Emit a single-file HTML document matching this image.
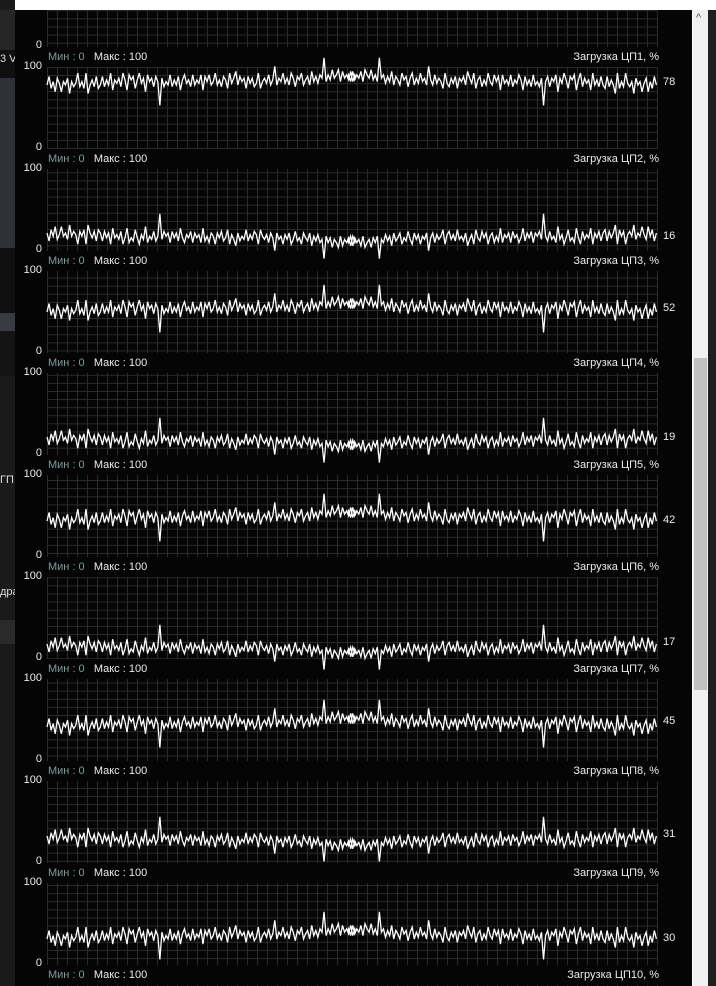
<!DOCTYPE html>
<html><head><meta charset="utf-8"><style>
html,body{margin:0;padding:0;width:716px;height:986px;overflow:hidden;background:#0a0a0a;font-family:"Liberation Sans",sans-serif;}
.a{position:absolute;}
.t{position:absolute;font-size:11px;color:#ececec;white-space:nowrap;line-height:12px;}
.ax{width:27px;text-align:right;left:15px;}
.mn{color:#7f9a9a;}
.r{left:563px;width:96px;text-align:right;}
.v{left:663px;}
</style></head><body>
<div class="a" style="left:0;top:0;width:15px;height:986px;background:#1a1a1a"></div>
<div class="a" style="left:0;top:10px;width:15px;height:40px;background:#262626"></div>
<div class="a" style="left:0;top:50px;width:15px;height:28px;background:#0f0f0f"></div>
<div class="a" style="left:0;top:78px;width:15px;height:170px;background:#2e3138"></div>
<div class="a" style="left:0;top:248px;width:15px;height:65px;background:#101010"></div>
<div class="a" style="left:0;top:313px;width:15px;height:18px;background:#383b42"></div>
<div class="a" style="left:0;top:331px;width:15px;height:45px;background:#141414"></div>
<div class="a" style="left:0;top:620px;width:15px;height:24px;background:#2a2a2a"></div>
<div class="t" style="left:0;top:53px;color:#ddd">3 V</div>
<div class="t" style="left:0;top:474px;color:#ddd">ГП</div>
<div class="t" style="left:0;top:586px;color:#ddd">дра</div>
<div class="a" style="left:15px;top:0;width:677px;height:986px;background:#050505"></div>
<svg class="a" style="left:0;top:0" width="716" height="986">
<defs>
<pattern id="g" x="47" y="67" width="10" height="8.1" patternUnits="userSpaceOnUse">
<path d="M0.5,0V8.1M0,0.5H10" stroke="#2b2b2b" stroke-width="1" fill="none"/>
</pattern>
<path id="w" fill="none" stroke="#fff" stroke-width="1.3" vector-effect="non-scaling-stroke" d="M47,0 l4,-5 4,7 4,-4 4,6 4,-8 4,3 4,5 4,-6 4,2 4,-4 4,9 4,-7 4,3 4,-2 4,-6 4,8 4,-3 4,4 4,-9 4,12 4,-5 4,-3 4,4 4,-6 4,7 4,-2 4,-5 4,6 4,-4 4,3 4,-7 4,10 4,-6 4,2 4,-3 4,5 4,-8 4,4 4,6 4,-9 4,3 4,-2 4,7 4,-5 4,-4 4,6 4,-3 4,8 4,-10 4,4 4,-2 4,5 4,-6 4,3 4,14 4,-16 4,5 4,-3 4,2 4,-6 4,7 4,-4 4,3 4,-5 4,8 4,-6 4,-3 4,5 4,-2 4,4 4,-7 4,6 4,-3 4,2 4,-5 4,9 4,-8 4,3 4,-4 4,6 4,-2 4,-5 4,7 4,-3 4,4 4,-6 4,2 4,5 4,-9 4,6 4,-3 4,-4 4,8 4,-5 4,3 4,-2 4,6 4,-7 4,4 4,-3 4,5 4,-2 4,-6 4,9 4,-4 4,-2 4,3 4,-5 4,6 4,-3 4,-8 4,11 4,-4 4,2 4,-5 4,6 4,-3 4,4 4,-7 4,3 4,5 4,-6 4,2 4,-4 4,7 4,-3 4,-2 4,5 4,-8 4,6 4,-3 4,4 4,-5 4,2 4,-12 4,14 4,-4 4,3 4,-6 4,5 4,-2 4,-3 4,7 4,-6 4,4 4,-2 4,3 4,-5 4,6 4,-4 2,2"/>
<g id="L"><use href="#w" transform="translate(22.9,0) scale(0.513,1.7)"/><use href="#w" transform="translate(680.5,0) scale(-0.513,1.7)"/></g>
<g id="M"><use href="#w" transform="translate(22.9,0) scale(0.513,-1.6)"/><use href="#w" transform="translate(680.5,0) scale(-0.513,-1.6)"/></g>
</defs>
<g fill="url(#g)">
<rect x="47" y="-35" width="611" height="82"/>
<rect x="47" y="67" width="611" height="82"/>
<rect x="47" y="169" width="611" height="82"/>
<rect x="47" y="271" width="611" height="82"/>
<rect x="47" y="373" width="611" height="82"/>
<rect x="47" y="475" width="611" height="82"/>
<rect x="47" y="577" width="611" height="82"/>
<rect x="47" y="679" width="611" height="82"/>
<rect x="47" y="781" width="611" height="82"/>
<rect x="47" y="883" width="611" height="82"/>
<rect x="47" y="985" width="611" height="1"/>
</g>
<use href="#L" transform="translate(0,85)"/>
<use href="#M" transform="translate(0,233)"/>
<use href="#L" transform="translate(0,312)"/>
<use href="#M" transform="translate(0,437)"/>
<use href="#L" transform="translate(0,521)"/>
<use href="#M" transform="translate(0,644)"/>
<use href="#L" transform="translate(0,727)"/>
<use href="#M" transform="translate(0,836)"/>
<use href="#L" transform="translate(0,939)"/>
</svg>
<div class="a" style="left:15px;top:0;width:677px;height:10px;background:#fff"></div>
<div class="a" style="left:692px;top:0;width:24px;height:986px;background:#fff"></div>
<div class="a" style="left:693px;top:10px;width:15px;height:976px;background:#f0f0f0"></div>
<div class="a" style="left:694px;top:358px;width:13px;height:332px;background:#c1c1c1"></div>
<div class="a" style="left:708px;top:10px;width:8px;height:976px;background:#1e1e1e"></div>
<div class="t" style="left:696px;top:12px;color:#555">^</div>

<div class="t ax" style="top:39px">0</div>
<div class="t" style="left:48px;top:51px"><span class="mn">Мин : 0</span>&nbsp;&nbsp; Макс : 100</div><div class="t r" style="top:51px">Загрузка ЦП1, %</div>

<div class="t ax" style="top:60px">100</div><div class="t ax" style="top:141px">0</div>
<div class="t" style="left:48px;top:153px"><span class="mn">Мин : 0</span>&nbsp;&nbsp; Макс : 100</div><div class="t r" style="top:153px">Загрузка ЦП2, %</div>
<div class="t v" style="top:76px">78</div>

<div class="t ax" style="top:162px">100</div><div class="t ax" style="top:243px">0</div>
<div class="t" style="left:48px;top:255px"><span class="mn">Мин : 0</span>&nbsp;&nbsp; Макс : 100</div><div class="t r" style="top:255px">Загрузка ЦП3, %</div>
<div class="t v" style="top:230px">16</div>

<div class="t ax" style="top:264px">100</div><div class="t ax" style="top:345px">0</div>
<div class="t" style="left:48px;top:357px"><span class="mn">Мин : 0</span>&nbsp;&nbsp; Макс : 100</div><div class="t r" style="top:357px">Загрузка ЦП4, %</div>
<div class="t v" style="top:302px">52</div>

<div class="t ax" style="top:366px">100</div><div class="t ax" style="top:447px">0</div>
<div class="t" style="left:48px;top:459px"><span class="mn">Мин : 0</span>&nbsp;&nbsp; Макс : 100</div><div class="t r" style="top:459px">Загрузка ЦП5, %</div>
<div class="t v" style="top:431px">19</div>

<div class="t ax" style="top:468px">100</div><div class="t ax" style="top:549px">0</div>
<div class="t" style="left:48px;top:561px"><span class="mn">Мин : 0</span>&nbsp;&nbsp; Макс : 100</div><div class="t r" style="top:561px">Загрузка ЦП6, %</div>
<div class="t v" style="top:514px">42</div>

<div class="t ax" style="top:570px">100</div><div class="t ax" style="top:651px">0</div>
<div class="t" style="left:48px;top:663px"><span class="mn">Мин : 0</span>&nbsp;&nbsp; Макс : 100</div><div class="t r" style="top:663px">Загрузка ЦП7, %</div>
<div class="t v" style="top:636px">17</div>

<div class="t ax" style="top:672px">100</div><div class="t ax" style="top:753px">0</div>
<div class="t" style="left:48px;top:765px"><span class="mn">Мин : 0</span>&nbsp;&nbsp; Макс : 100</div><div class="t r" style="top:765px">Загрузка ЦП8, %</div>
<div class="t v" style="top:715px">45</div>

<div class="t ax" style="top:774px">100</div><div class="t ax" style="top:855px">0</div>
<div class="t" style="left:48px;top:867px"><span class="mn">Мин : 0</span>&nbsp;&nbsp; Макс : 100</div><div class="t r" style="top:867px">Загрузка ЦП9, %</div>
<div class="t v" style="top:828px">31</div>

<div class="t ax" style="top:876px">100</div><div class="t ax" style="top:957px">0</div>
<div class="t" style="left:48px;top:969px"><span class="mn">Мин : 0</span>&nbsp;&nbsp; Макс : 100</div><div class="t r" style="top:969px">Загрузка ЦП10, %</div>
<div class="t v" style="top:932px">30</div>
</body></html>
